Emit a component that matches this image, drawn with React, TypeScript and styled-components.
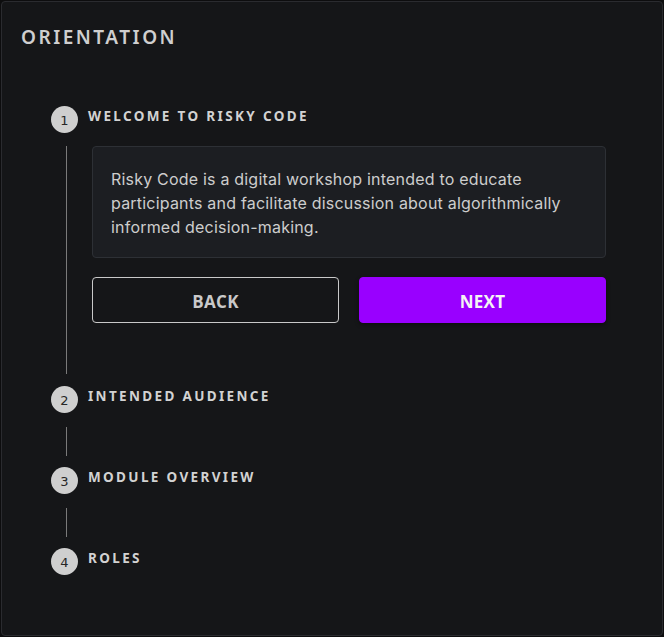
import React from "react";
import styled, { createGlobalStyle } from "styled-components";

const Global = createGlobalStyle`
  html, body { margin: 0; padding: 0; background: #0d0d0e; }
  body { font-family: "Inter", "Noto Sans", sans-serif; }
  * { box-sizing: border-box; }
`;

const Card = styled.div`
  margin: 1px;
  height: 635px;
  background: #151618;
  border: 1px solid #2a2b2f;
  border-radius: 4px;
  padding: 22px 56px 0 19px;
`;

const Title = styled.h1`
  margin: 0;
  font-family: "Noto Sans", sans-serif;
  font-size: 19px;
  font-weight: 600;
  line-height: 26px;
  letter-spacing: 2.5px;
  color: #cfcfcf;
`;

const Stepper = styled.div`
  margin: 56px 0 0 30px;
  display: flex;
  flex-direction: column;
`;

const StepHeader = styled.div`
  display: flex;
  align-items: flex-start;
  gap: 10px;
`;

const Circle = styled.div`
  width: 27px;
  height: 27px;
  border-radius: 50%;
  background: #cfcfcf;
  color: #262626;
  font-family: "DejaVu Sans", sans-serif;
  font-size: 13px;
  display: flex;
  align-items: center;
  justify-content: center;
  flex-shrink: 0;
  padding-top: 1px;
`;

const StepLabel = styled.div`
  font-family: "Noto Sans", sans-serif;
  font-size: 13.5px;
  font-weight: 700;
  line-height: 20px;
  letter-spacing: 2.35px;
  color: #d2d2d2;
`;

const Content = styled.div`
  margin: 13px 0 12px 15px;
  border-left: 1px solid #7a7a7a;
  padding: 0 0 51px 25px;
`;

const Connector = styled.div`
  margin: 14px 0 11px 15px;
  height: 29px;
  border-left: 1px solid #7a7a7a;
`;

const InfoBox = styled.div`
  background: #1c1e22;
  border: 1px solid #2d3035;
  border-radius: 4px;
  padding: 20px 18px 18px;
  font-family: "Inter", sans-serif;
  font-size: 16px;
  line-height: 24px;
  letter-spacing: 0.2px;
  color: #cdcdcd;
`;

const Buttons = styled.div`
  margin-top: 19px;
  display: grid;
  grid-template-columns: 1fr 1fr;
  gap: 20px;
`;

const Button = styled.button<{ $primary?: boolean }>`
  height: 46px;
  padding-top: 3px;
  border-radius: 4px;
  font-family: "Open Sans", sans-serif;
  font-size: 17px;
  font-weight: 700;
  letter-spacing: 0.3px;
  cursor: pointer;
  border: 1px solid ${(p) => (p.$primary ? "#9900ff" : "#c9c9c9")};
  background: ${(p) => (p.$primary ? "#9900ff" : "transparent")};
  color: ${(p) => (p.$primary ? "#f4f4f4" : "#c9c9c9")};
  box-shadow: ${(p) => (p.$primary ? "0 2px 4px rgba(0,0,0,0.4)" : "none")};
`;

const steps = ["WELCOME TO RISKY CODE", "INTENDED AUDIENCE", "MODULE OVERVIEW", "ROLES"];

export default function App() {
  return (
    <>
      <Global />
      <Card>
        <Title>ORIENTATION</Title>
        <Stepper>
          {steps.map((label, i) => (
            <React.Fragment key={label}>
              <StepHeader>
                <Circle>{i + 1}</Circle>
                <StepLabel>{label}</StepLabel>
              </StepHeader>
              {i === 0 && (
                <Content>
                  <InfoBox>
                    Risky Code is a digital workshop intended to educate participants and facilitate
                    discussion about algorithmically informed decision-making.
                  </InfoBox>
                  <Buttons>
                    <Button>BACK</Button>
                    <Button $primary>NEXT</Button>
                  </Buttons>
                </Content>
              )}
              {i > 0 && i < steps.length - 1 && <Connector />}
            </React.Fragment>
          ))}
        </Stepper>
      </Card>
    </>
  );
}
